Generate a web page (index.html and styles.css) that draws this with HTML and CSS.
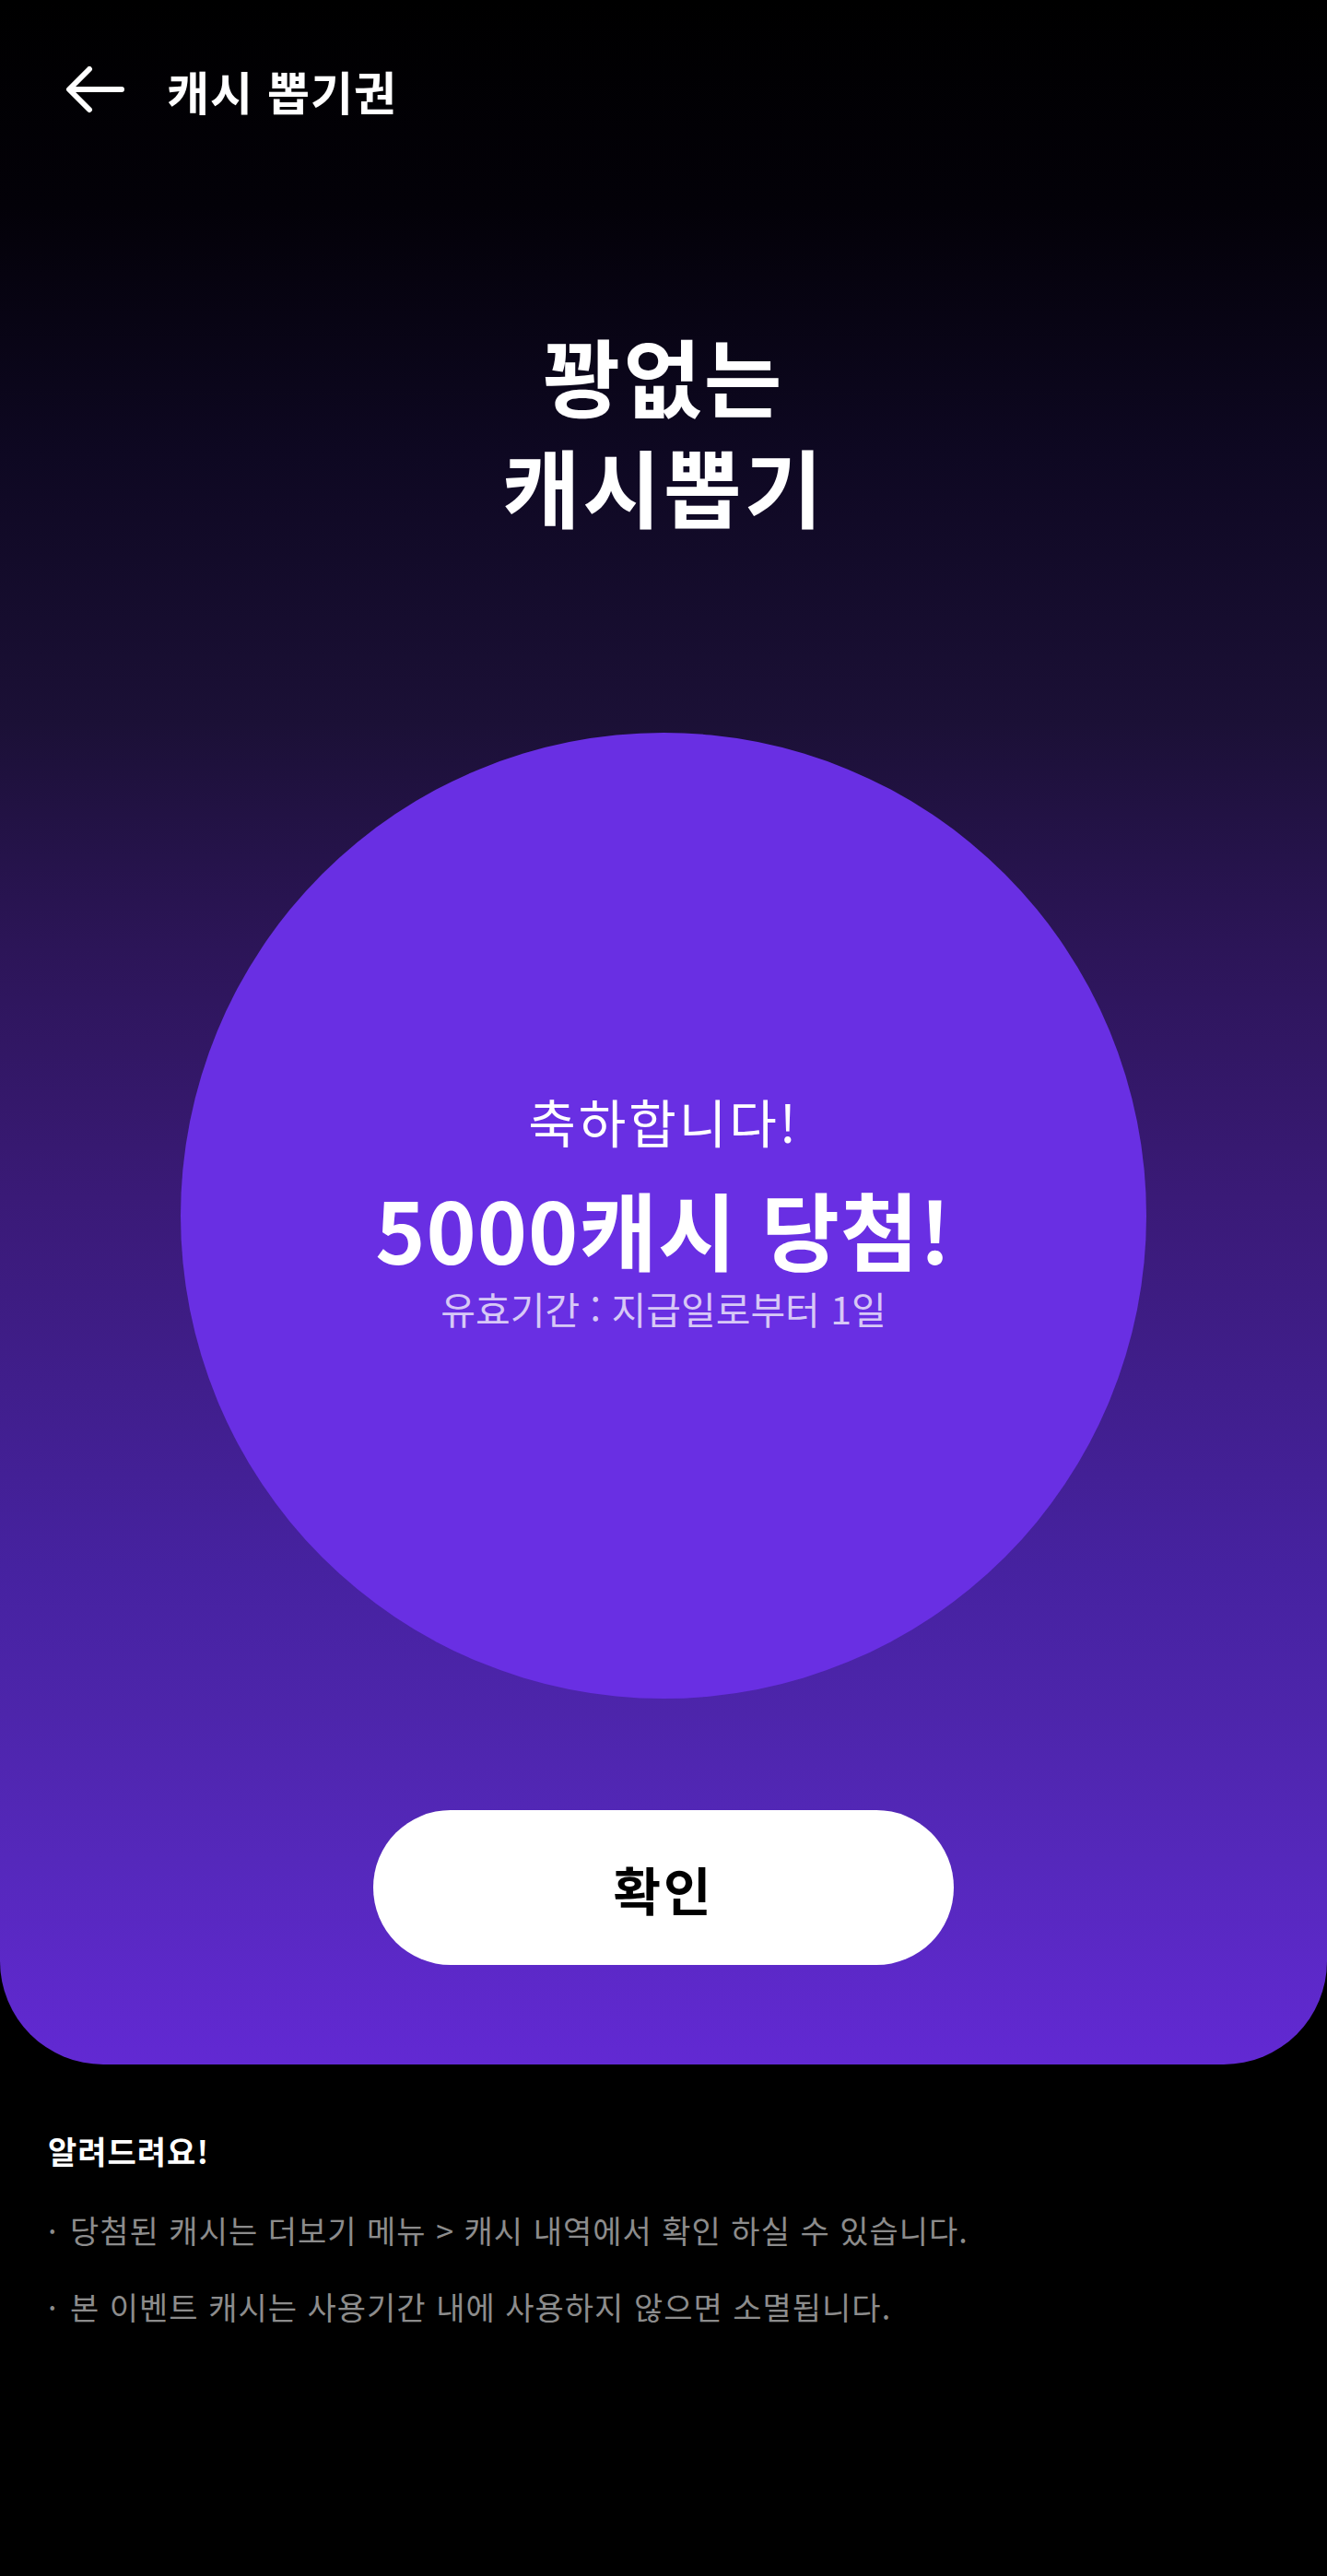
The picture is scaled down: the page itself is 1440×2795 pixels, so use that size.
FILE: index.html
```html
<!DOCTYPE html>
<html lang="ko">

<head>
    <meta charset="utf-8">
    <title>캐시 뽑기권</title>
    <link rel="stylesheet" href="styles.css">
</head>

<body>

    <div class="panel">
        <header class="top-bar">
            <a class="back" href="#">
                <svg width="64" height="52" viewBox="0 0 64 52">
                    <path d="M61 25 H5 M26 3 L4 25 L26 47" fill="none" stroke="#fff" stroke-width="6" stroke-linecap="round" stroke-linejoin="round" />
                </svg>
            </a>
            <span class="top-title">캐시 뽑기권</span>
        </header>

        <h1 class="event-title">꽝없는<br>캐시뽑기</h1>

        <div class="result-circle">
            <p class="congrats">축하합니다!</p>
            <p class="prize">5000캐시 당첨!</p>
            <p class="expire">유효기간 : 지급일로부터 1일</p>
        </div>

        <button class="confirm-button">확인</button>
    </div>

    <section class="notice">
        <h2>알려드려요!</h2>
        <ul>
            <li>당첨된 캐시는 더보기 메뉴 &gt; 캐시 내역에서 확인 하실 수 있습니다.</li>
            <li>본 이벤트 캐시는 사용기간 내에 사용하지 않으면 소멸됩니다.</li>
        </ul>
    </section>

</body>

</html>
```

FILE: styles.css
```css
body {
    font-family: "Noto Sans CJK KR", "Noto Sans", sans-serif;
    margin: 0;
    padding: 0;
    background-color: #000;
    color: #fff;
    width: 1440px;
    min-height: 2795px;
}

.panel {
    height: 2240px;
    box-sizing: border-box;
    display: flex;
    flex-direction: column;
    align-items: center;
    border-radius: 0 0 112px 112px;
    background: linear-gradient(to bottom,
            #000 0%,
            #030108 10%,
            #0e0822 22%,
            #1b1036 35%,
            #2c1558 46%,
            #3a1a77 58%,
            #4622a0 76%,
            #4d25ab 83%,
            #5528bb 90%,
            #6229d3 100%);
}

.top-bar {
    align-self: stretch;
    height: 196px;
    display: flex;
    align-items: center;
    padding-left: 71px;
}

.back {
    display: flex;
    width: 64px;
    height: 52px;
    margin-right: 46px;
}

.top-title {
    font-size: 50px;
    font-weight: bold;
    letter-spacing: 1px;
}

.event-title {
    margin: 150px 0 0;
    font-size: 92px;
    line-height: 120px;
    font-weight: bold;
    text-align: center;
    letter-spacing: 3px;
}

.result-circle {
    width: 1048px;
    height: 1048px;
    margin-top: 209px;
    padding-bottom: 14px;
    box-sizing: border-box;
    border-radius: 50%;
    background-color: #692fe3;
    display: flex;
    flex-direction: column;
    align-items: center;
    justify-content: center;
    text-align: center;
}

.result-circle p {
    margin: 0;
}

.congrats {
    font-size: 56px;
    line-height: 70px;
    font-weight: 400;
    letter-spacing: 3px;
}

.prize {
    margin-top: 31px !important;
    font-size: 92px;
    line-height: 100px;
    font-weight: bold;
    letter-spacing: 1px;
}

.expire {
    margin-top: 12px !important;
    font-size: 41px;
    line-height: 50px;
    color: #d7c8f6;
    letter-spacing: 0;
}

.confirm-button {
    margin-top: 121px;
    width: 630px;
    height: 168px;
    border: none;
    border-radius: 84px;
    background-color: #fff;
    color: #000;
    font-family: inherit;
    font-size: 56px;
    font-weight: bold;
    letter-spacing: 3px;
    cursor: pointer;
}

.notice {
    padding: 72px 52px 0;
}

.notice h2 {
    margin: 0;
    font-size: 34px;
    line-height: 44px;
    font-weight: bold;
    letter-spacing: 1px;
}

.notice ul {
    list-style: none;
    margin: 40px 0 0;
    padding: 0;
}

.notice li {
    font-size: 34px;
    line-height: 48px;
    color: #8c8c8c;
    letter-spacing: 1px;
    margin-bottom: 35px;
}

.notice li::before {
    content: "·";
    display: inline-block;
    width: 24px;
}
```
